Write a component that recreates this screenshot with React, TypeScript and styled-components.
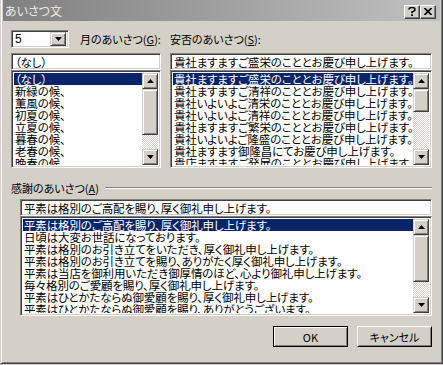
import React from 'react';
import styled, { createGlobalStyle } from 'styled-components';

const GlobalStyle = createGlobalStyle`
  html, body {
    margin: 0;
    padding: 0;
    background: #d4d0c8;
  }
  body {
    font-family: "Noto Sans CJK JP", "Noto Sans", sans-serif;
    font-size: 11px;
    font-feature-settings: 'palt';
  }
`;

const Window = styled.div`
  width: 443px;
  height: 364px;
  box-sizing: border-box;
  background: #d4d0c8;
  border-left: 1px solid #d4d0c8;
  border-right: 1px solid #404040;
  border-bottom: 1px solid #404040;
  box-shadow: inset 1px 0 #fff, inset -1px -1px #808080;
  padding: 0 2px 2px 2px;
  display: flex;
  flex-direction: column;
`;

const TitleBar = styled.div`
  height: 21px;
  flex-shrink: 0;
  display: flex;
  align-items: center;
  padding: 0 4px 0 2px;
  background: linear-gradient(to right, #808080, #c0c0c0);
`;

const TitleText = styled.div`
  flex: 1;
  color: #eceae6;
  font-size: 12px;
  line-height: 14px;
`;

const CaptionButton = styled.div`
  width: 16px;
  height: 14px;
  box-sizing: border-box;
  margin-top: 2px;
  background: #d4d0c8;
  border-top: 1px solid #fff;
  border-left: 1px solid #fff;
  border-right: 1px solid #404040;
  border-bottom: 1px solid #404040;
  box-shadow: inset -1px -1px #808080;
  display: flex;
  align-items: center;
  justify-content: center;
`;

const Body = styled.div`
  flex: 1;
  padding: 9px 8px 0 8px;
  display: flex;
  flex-direction: column;
`;

const TopGrid = styled.div`
  display: grid;
  grid-template-columns: 150px 262px;
  column-gap: 9px;
`;

const Column = styled.div`
  display: flex;
  flex-direction: column;
`;

const HeaderRow = styled.div`
  height: 18px;
  display: flex;
  align-items: center;
  margin-bottom: 5px;
`;

const Label = styled.span<{ $indent?: number }>`
  color: #000;
  line-height: 13px;
  margin-left: ${(p) => p.$indent ?? 0}px;
  white-space: nowrap;
  u {
    text-decoration: underline;
    text-underline-offset: 1px;
  }
`;

const Sunken = styled.div`
  box-sizing: border-box;
  background: #fff;
  border-top: 1px solid #808080;
  border-left: 1px solid #808080;
  border-right: 1px solid #fff;
  border-bottom: 1px solid #fff;
  box-shadow: inset 1px 1px #404040, inset -1px -1px #d4d0c8;
  padding: 2px;
`;

const Combo = styled(Sunken)`
  width: 58px;
  height: 18px;
  display: flex;
  align-items: center;
  padding: 2px 2px 2px 3px;
`;

const ComboValue = styled.span`
  flex: 1;
  font-family: "Liberation Sans", sans-serif;
  font-size: 12px;
  line-height: 12px;
`;

const DropButton = styled.div`
  width: 16px;
  height: 14px;
  box-sizing: border-box;
  background: #d4d0c8;
  border-top: 1px solid #d4d0c8;
  border-left: 1px solid #d4d0c8;
  border-right: 1px solid #404040;
  border-bottom: 1px solid #404040;
  box-shadow: inset 1px 1px #fff, inset -1px -1px #808080;
  display: flex;
  align-items: center;
  justify-content: center;
`;

const Edit = styled(Sunken)`
  height: 17px;
  padding: 2px 2px 0 3px;
  font-size: 11.5px;
  letter-spacing: -0.15px;
  line-height: 12px;
  white-space: nowrap;
  overflow: hidden;
`;

const ListBox = styled(Sunken)<{ $height: number }>`
  height: ${(p) => p.$height}px;
  padding: 2px;
  display: flex;
`;

const Items = styled.div`
  flex: 1;
  overflow: hidden;
`;

const Item = styled.div<{ $selected?: boolean }>`
  height: 12px;
  line-height: 12px;
  padding-left: 1px;
  font-size: 11.5px;
  letter-spacing: -0.15px;
  white-space: nowrap;
  color: ${(p) => (p.$selected ? '#fff' : '#000')};
  background: ${(p) => (p.$selected ? '#0a246a' : 'transparent')};
`;

const ScrollBar = styled.div`
  width: 16px;
  flex-shrink: 0;
  display: flex;
  flex-direction: column;
`;

const ArrowButton = styled(DropButton)`
  height: 16px;
  flex-shrink: 0;
`;

const Thumb = styled.div<{ $size: number }>`
  height: ${(p) => p.$size}px;
  flex-shrink: 0;
  box-sizing: border-box;
  background: #d4d0c8;
  border-top: 1px solid #d4d0c8;
  border-left: 1px solid #d4d0c8;
  border-right: 1px solid #404040;
  border-bottom: 1px solid #404040;
  box-shadow: inset 1px 1px #fff, inset -1px -1px #808080;
`;

const Track = styled.div`
  flex: 1;
  background: repeating-conic-gradient(#fff 0 25%, #d4d0c8 0 50%) 0 0 / 2px 2px;
`;

const GroupHeader = styled.div`
  display: flex;
  align-items: center;
  margin-top: 14px;
  height: 12px;
`;

const GrooveLine = styled.div`
  flex: 1;
  height: 0;
  margin-left: 6px;
  border-top: 1px solid #808080;
  border-bottom: 1px solid #fff;
`;

const Indented = styled.div`
  margin-top: 5px;
  margin-left: 9px;
  display: flex;
  flex-direction: column;
`;

const ButtonRow = styled.div`
  display: flex;
  justify-content: flex-end;
  gap: 9px;
  margin-top: 10px;
`;

const PushButton = styled.div<{ $default?: boolean }>`
  width: 75px;
  height: 21px;
  box-sizing: border-box;
  background: #d4d0c8;
  display: flex;
  align-items: center;
  justify-content: center;
  line-height: 12px;
  border: 1px solid ${(p) => (p.$default ? '#000' : '#fff')};
  border-right-color: #000;
  border-bottom-color: #000;
  box-shadow: ${(p) =>
    p.$default
      ? 'inset 1px 1px #fff, inset -1px -1px #808080'
      : 'inset 1px 1px #d4d0c8, inset -1px -1px #808080'};
`;

const Triangle = ({ dir }: { dir: 'up' | 'down' }) => (
  <svg width="7" height="4" viewBox="0 0 7 4">
    {dir === 'up' ? <polygon points="3.5,0 7,4 0,4" fill="#000" /> : <polygon points="0,0 7,0 3.5,4" fill="#000" />}
  </svg>
);

type ListProps = {
  items: string[];
  height: number;
  thumb: number;
};

const List = ({ items, height, thumb }: ListProps) => (
  <ListBox $height={height}>
    <Items>
      {items.map((t, i) => (
        <Item key={i} $selected={i === 0}>
          {t}
        </Item>
      ))}
    </Items>
    <ScrollBar>
      <ArrowButton>
        <Triangle dir="up" />
      </ArrowButton>
      <Thumb $size={thumb} />
      <Track />
      <ArrowButton>
        <Triangle dir="down" />
      </ArrowButton>
    </ScrollBar>
  </ListBox>
);

const months = [
  '（なし）',
  '新緑の候、',
  '薫風の候、',
  '初夏の候、',
  '立夏の候、',
  '暮春の候、',
  '老春の候、',
  '晩春の候、',
];

const safety = [
  '貴社ますますご盛栄のこととお慶び申し上げます。',
  '貴社ますますご清祥のこととお慶び申し上げます。',
  '貴社いよいよご清栄のこととお慶び申し上げます。',
  '貴社いよいよご清祥のこととお慶び申し上げます。',
  '貴社ますますご繁栄のこととお慶び申し上げます。',
  '貴社いよいよご隆盛のこととお慶び申し上げます。',
  '貴社ますます御隆昌にてお慶び申し上げます。',
  '貴店ますますご発展のこととお慶び申し上げます。',
];

const thanks = [
  '平素は格別のご高配を賜り、厚く御礼申し上げます。',
  '日頃は大変お世話になっております。',
  '平素は格別のお引き立てをいただき、厚く御礼申し上げます。',
  '平素は格別のお引き立てを賜り、ありがたく厚く御礼申し上げます。',
  '平素は当店を御利用いただき御厚情のほど、心より御礼申し上げます。',
  '毎々格別のご愛顧を賜り、厚く御礼申し上げます。',
  '平素はひとかたならぬ御愛顧を賜り、厚く御礼申し上げます。',
  '平素はひとかたならぬ御愛顧を賜り、ありがとうございます。',
];

export default function App() {
  return (
    <>
      <GlobalStyle />
      <Window>
        <TitleBar>
          <TitleText>あいさつ文</TitleText>
          <CaptionButton>
            <svg width="8" height="9" viewBox="0 0 8 9">
              <path d="M1 2.5 Q1 0.5 4 0.5 Q7 0.5 7 2.5 Q7 4 4 5 V6.3" stroke="#000" strokeWidth="1.6" fill="none" />
              <rect x="3.2" y="7.3" width="1.8" height="1.7" fill="#000" />
            </svg>
          </CaptionButton>
          <CaptionButton>
            <svg width="8" height="7" viewBox="0 0 8 7">
              <path d="M0.5 0 L7.5 7 M7.5 0 L0.5 7" stroke="#000" strokeWidth="1.6" />
            </svg>
          </CaptionButton>
        </TitleBar>
        <Body>
          <TopGrid>
            <Column>
              <HeaderRow>
                <Combo>
                  <ComboValue>5</ComboValue>
                  <DropButton>
                    <Triangle dir="down" />
                  </DropButton>
                </Combo>
                <Label $indent={11}>
                  月のあいさつ(<u>G</u>):
                </Label>
              </HeaderRow>
              <Edit>（なし）</Edit>
              <List items={months} height={98} thumb={46} />
            </Column>
            <Column>
              <HeaderRow>
                <Label>
                  安否のあいさつ(<u>S</u>):
                </Label>
              </HeaderRow>
              <Edit>{safety[0]}</Edit>
              <List items={safety} height={98} thumb={23} />
            </Column>
          </TopGrid>
          <GroupHeader>
            <Label>
              感謝のあいさつ(<u>A</u>)
            </Label>
            <GrooveLine />
          </GroupHeader>
          <Indented>
            <Edit>{thanks[0]}</Edit>
            <List items={thanks} height={100} thumb={47} />
          </Indented>
          <ButtonRow>
            <PushButton $default>OK</PushButton>
            <PushButton>キャンセル</PushButton>
          </ButtonRow>
        </Body>
      </Window>
    </>
  );
}
